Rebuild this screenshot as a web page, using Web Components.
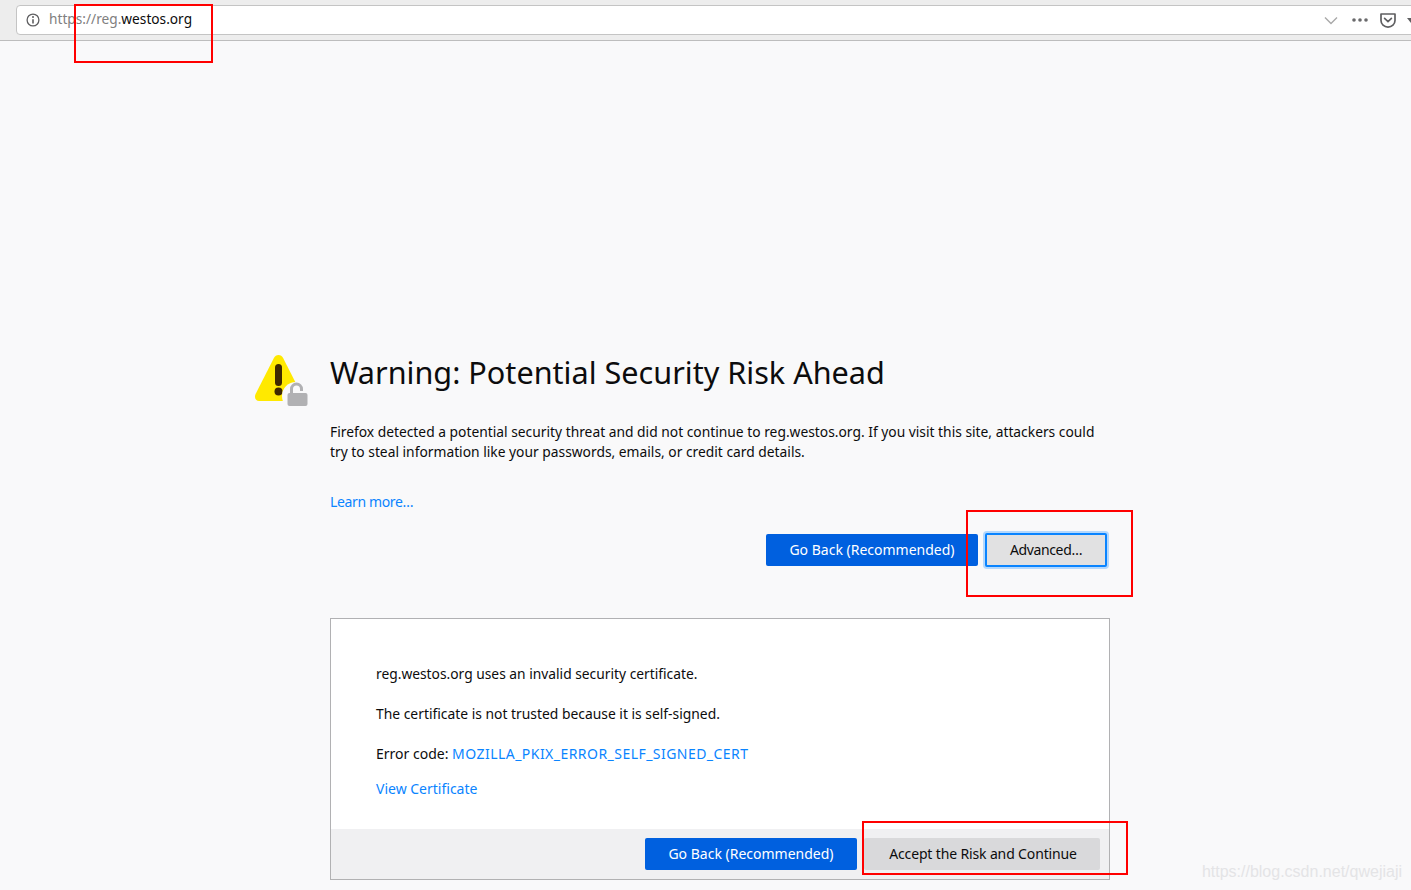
<!DOCTYPE html>
<html>
<head>
<meta charset="utf-8">
<title>Insecure Connection</title>
<style>
  html, body { margin: 0; height: 100%; overflow: hidden; background: #f9f9fa; }
  body { position: relative; font-family: "Noto Sans", sans-serif; color: #0c0c0d; }
</style>
</head>
<body>
<url-toolbar></url-toolbar>
<error-page></error-page>
<red-mark style="left:74px;top:4px;width:135px;height:55px"></red-mark>
<red-mark style="left:966px;top:510px;width:163px;height:83px"></red-mark>
<red-mark style="left:862px;top:821px;width:262px;height:50px"></red-mark>
<span-watermark>https://blog.csdn.net/qwejiaji</span-watermark>

<script>
class UrlToolbar extends HTMLElement {
  connectedCallback() {
    this.attachShadow({ mode: 'open' });
    this.shadowRoot.innerHTML = `
      <style>
        :host { display: block; height: 35px; background: #ededed; border-bottom: 1px solid #bdbdbd; padding: 5px 0 0 16px; overflow: hidden; }
        .bar { display: flex; align-items: center; height: 28px; width: 1402px; background: #fff; border: 1px solid #c4c4c4; border-radius: 4px; padding-left: 9px; font-size: 13.7px; line-height: 26px; }
        .url { margin-left: 9px; color: #808080; flex: 1; position: relative; top: -1px; }
        .url b { font-weight: 400; color: #0c0c0d; }
        svg { display: block; flex: none; }
        .chev { margin-right: 14px; }
        .dots { margin-right: 12px; }
        .pocket { margin-right: 11px; }
        .more { margin-right: 13px; }
      </style>
      <div class="bar">
        <svg width="14" height="14" viewBox="0 0 14 14" fill="none" stroke="#5f5f61" stroke-width="1.3">
          <circle cx="7" cy="7" r="5.9"/>
          <path d="M7 6.2v4.300" stroke-width="1.6"/>
          <circle cx="7" cy="3.900" r="1" fill="#5f5f61" stroke="none"/>
        </svg>
        <span class="url">https://reg.<b>westos.org</b></span>
        <svg class="chev" width="14" height="9" viewBox="0 0 14 9" fill="none" stroke="#a9a9a9" stroke-width="1.4"><path d="M1 1.5l6 6 6-6"/></svg>
        <svg class="dots" width="16" height="4" viewBox="0 0 16 4" fill="#6a6a6c"><circle cx="2" cy="2" r="1.8"/><circle cx="8" cy="2" r="1.8"/><circle cx="14" cy="2" r="1.8"/></svg>
        <svg class="pocket" width="16" height="15" viewBox="0 0 16 15" fill="none" stroke="#5f5f61" stroke-width="1.7">
          <path d="M1 1h14v6.5a7 6.6 0 0 1-14 0z" stroke-linejoin="round"/>
          <path d="M4.6 5.4L8 8.6l3.4-3.2" stroke-linecap="round"/>
        </svg>
        <svg class="more" width="8" height="5" viewBox="0 0 8 5" fill="#5f5f61"><path d="M0 0h8L4 5z"/></svg>
      </div>
    `;
  }
}

class ActionButton extends HTMLElement {
  connectedCallback() {
    this.attachShadow({ mode: 'open' });
    this.shadowRoot.innerHTML = `
      <style>
        :host { display: inline-flex; align-items: center; justify-content: center; box-sizing: border-box; height: 32px; border-radius: 2px; font-size: 14px; white-space: nowrap; background: #e1e1e2; color: #0c0c0d; }
        :host([primary]) { background: #0060df; color: #fff; }
        :host([soft]) { background: #d9d9db; }
        :host([focused]) { height: 34px; border: 2px solid #0a84ff; box-shadow: 0 0 0 2px #b4d8fd; }
      </style>
      <slot></slot>
    `;
  }
}

class ErrorPage extends HTMLElement {
  connectedCallback() {
    this.attachShadow({ mode: 'open' });
    this.shadowRoot.innerHTML = `
      <style>
        :host { display: flex; padding: 312px 0 0 254px; font-size: 14px; line-height: 20px; }
        .icon { flex: none; width: 76px; padding-top: 1px; }
        .icon svg { display: block; }
        .content { width: 780px; flex: none; }
        h1 { margin: 0; font-size: 30.6px; font-weight: 400; line-height: 38px; height: 38px; }
        p { margin: 0; }
        .intro { margin-top: 31px; font-size: 13.82px; }
        a { color: #0a84ff; text-decoration: none; }
        .learn { margin-top: 30px; letter-spacing: -.36px; }
        .actions { display: flex; align-items: center; justify-content: flex-end; gap: 7px; height: 32px; margin-top: 22px; padding-right: 3px; }
        .go1 { width: 212px; }
        .adv { width: 122px; letter-spacing: -.36px; }
        .box { box-sizing: border-box; margin-top: 52px; height: 262px; background: #fff; border: 1px solid #b1b1b3; display: flex; flex-direction: column; }
        .text { flex: 1; padding: 45px 45px 0; }
        .l1 { font-size: 13.8px; }
        .l2 { margin-top: 20px; font-size: 13.87px; }
        .l3 { margin-top: 20px; }
        .l3 a { letter-spacing: .46px; }
        .l4 { margin-top: 15px; }
        .foot { display: flex; justify-content: flex-end; gap: 7px; height: 50px; box-sizing: border-box; padding: 9px 9px 0 0; background: #f0f0f2; }
        .go2 { width: 212px; }
        .acc { width: 236px; padding-left: 2px; letter-spacing: -.14px; }
      </style>
      <div class="icon">
        <svg width="54" height="54" viewBox="0 0 54 54">
          <path d="M24.500 1c-2 0-3.600 1.100-4.600 3L1.600 40c-1.700 3.500 .2 7 3.500 7h38.800c3.300 0 5.200-3.500 3.500-7L29.100 4c-1-1.900-2.600-3-4.600-3z" fill="#ffe900"/>
          <rect x="21" y="10" width="7" height="22" rx="3.500" fill="#3e2800"/>
          <circle cx="24.500" cy="37.500" r="4" fill="#3e2800"/>
          <circle cx="42" cy="42" r="14" fill="#f9f9fa"/>
          <path d="M37.500 39v-4a5 5 0 0 1 10 0v2" fill="none" stroke="#b1b1b3" stroke-width="3"/>
          <rect x="33.500" y="39" width="20" height="13" rx="2" fill="#b1b1b3"/>
        </svg>
      </div>
      <div class="content">
        <h1>Warning: Potential Security Risk Ahead</h1>
        <p class="intro">Firefox detected a potential security threat and did not continue to reg.westos.org. If you visit this site, attackers could try to steal information like your passwords, emails, or credit card details.</p>
        <p class="learn"><a href="#">Learn more…</a></p>
        <div class="actions">
          <action-button class="go1" primary>Go Back (Recommended)</action-button>
          <action-button class="adv" focused>Advanced…</action-button>
        </div>
        <div class="box">
          <div class="text">
            <p class="l1">reg.westos.org uses an invalid security certificate.</p>
            <p class="l2">The certificate is not trusted because it is self-signed.</p>
            <p class="l3">Error code: <a href="#">MOZILLA_PKIX_ERROR_SELF_SIGNED_CERT</a></p>
            <p class="l4"><a href="#">View Certificate</a></p>
          </div>
          <div class="foot">
            <action-button class="go2" primary>Go Back (Recommended)</action-button>
            <action-button class="acc" soft>Accept the Risk and Continue</action-button>
          </div>
        </div>
      </div>
    `;
  }
}

// annotation rectangles drawn over the screenshot
class RedMark extends HTMLElement {
  connectedCallback() {
    this.attachShadow({ mode: 'open' });
    this.shadowRoot.innerHTML = `
      <style>:host { display: block; position: absolute; border: 2px solid #f00; }</style>
    `;
  }
}

class SpanWatermark extends HTMLElement {
  connectedCallback() {
    this.attachShadow({ mode: 'open' });
    this.shadowRoot.innerHTML = `
      <style>:host { display: block; position: absolute; right: 9px; bottom: 8px; font-family: "Liberation Sans", sans-serif; font-size: 16px; line-height: 20px; color: #e4e4e6; }</style>
      <slot></slot>
    `;
  }
}

customElements.define('url-toolbar', UrlToolbar);
customElements.define('action-button', ActionButton);
customElements.define('error-page', ErrorPage);
customElements.define('red-mark', RedMark);
customElements.define('span-watermark', SpanWatermark);
</script>
</body>
</html>
